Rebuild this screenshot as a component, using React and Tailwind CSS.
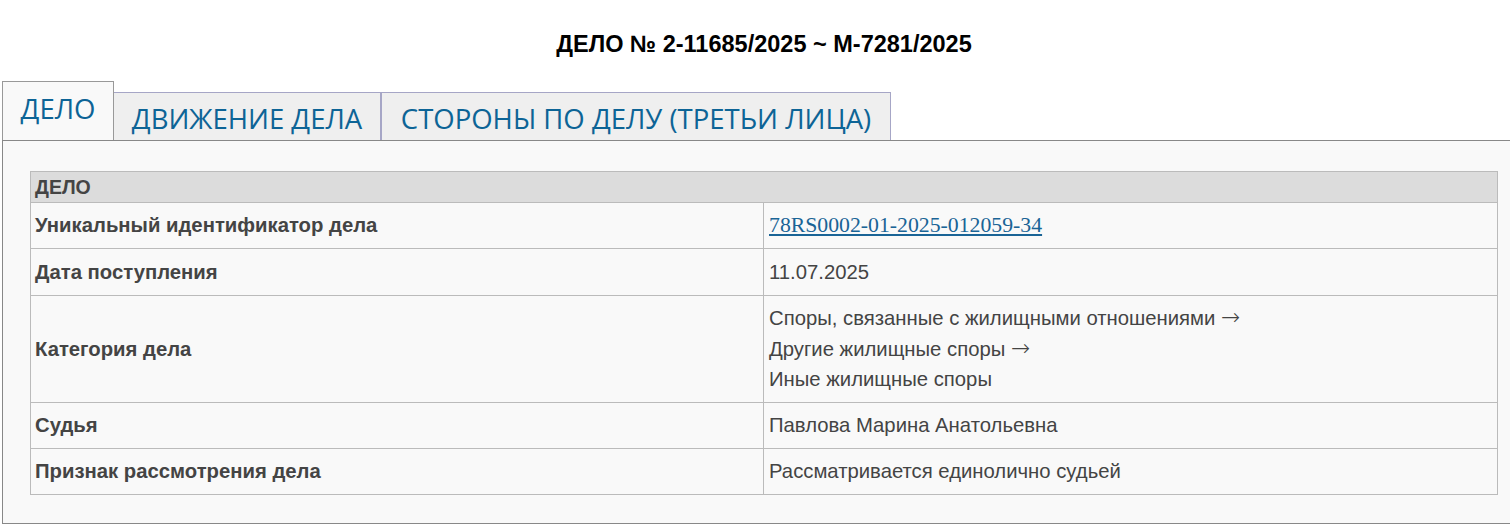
import React from "react";

const Arrow = () => (
  <span className="font-['DejaVu_Sans',sans-serif] font-extralight text-[23px] leading-[20px]">→</span>
);

const rows = [
  { label: "Уникальный идентификатор дела", link: "78RS0002-01-2025-012059-34", h: "h-[46px]" },
  { label: "Дата поступления", value: ["11.07.2025"], h: "h-[47px]" },
  {
    label: "Категория дела",
    value: [
      <>Споры, связанные с жилищными отношениями <Arrow /></>,
      <>Другие жилищные споры <Arrow /></>,
      "Иные жилищные споры",
    ],
    h: "h-[107px]",
  },
  { label: "Судья", value: ["Павлова Марина Анатольевна"], h: "h-[46px]" },
  { label: "Признак рассмотрения дела", value: ["Рассматривается единолично судьей"], h: "h-[46px]" },
];

export default function App() {
  return (
    <div className="w-[1510px] h-[524px] overflow-hidden bg-white">
      <div className="w-[1524px] ml-[2px]">
        <h1 className="h-[81px] pt-[32px] text-center text-[23.5px] leading-[24px] font-bold text-black font-['Liberation_Sans',Arial,sans-serif]">
          ДЕЛО № 2-11685/2025 ~ М-7281/2025
        </h1>
        <div className="flex items-end h-[59px] font-['Open_Sans','Noto_Sans',sans-serif] text-[#0d6496] text-[27.5px]">
          <div className="h-[59px] w-[112px] border border-b-0 border-[#999999] bg-[#f9f9f9] flex items-center justify-center pb-[4px] relative z-10">
            ДЕЛО
          </div>
          <div className="h-[48px] w-[267px] border border-b-0 border-l-0 border-[#a6a6c6] bg-[#efefef] flex items-center justify-center pt-[4px] whitespace-nowrap">
            ДВИЖЕНИЕ ДЕЛА
          </div>
          <div className="h-[48px] w-[510px] border border-b-0 border-[#a6a6c6] bg-[#efefef] flex items-center justify-center pt-[4px] whitespace-nowrap">
            СТОРОНЫ ПО ДЕЛУ (ТРЕТЬИ ЛИЦА)
          </div>
        </div>
        <div className="border border-[#888888] bg-[#f9f9f9] pt-[30px] pb-[28px] pl-[27px] pr-[26px] font-['Liberation_Sans',Arial,sans-serif] text-[20.3px] text-[#444444]">
          <table className="w-[1468px] border-collapse">
            <tbody>
              <tr className="bg-[#dcdcdc]">
                <td colSpan={2} className="h-[31px] border border-[#bbbbbb] px-[4px] font-bold text-[19.5px] leading-[20px]">
                  ДЕЛО
                </td>
              </tr>
              {rows.map((r) => (
                <tr key={r.label}>
                  <td className={`w-[733px] ${r.h} border border-[#bbbbbb] px-[4px] font-bold align-middle`}>
                    {r.label}
                  </td>
                  <td className={`${r.h} border border-[#bbbbbb] px-[5px] py-0 leading-[30.5px] align-middle`}>
                    {r.link ? (
                      <a
                        href="#"
                        className="text-[#1a6496] underline font-['Liberation_Serif','Times_New_Roman',serif] text-[21.75px]"
                      >
                        {r.link}
                      </a>
                    ) : (
                      r.value.map((v, i) => <div key={i}>{v}</div>)
                    )}
                  </td>
                </tr>
              ))}
            </tbody>
          </table>
        </div>
      </div>
    </div>
  );
}
